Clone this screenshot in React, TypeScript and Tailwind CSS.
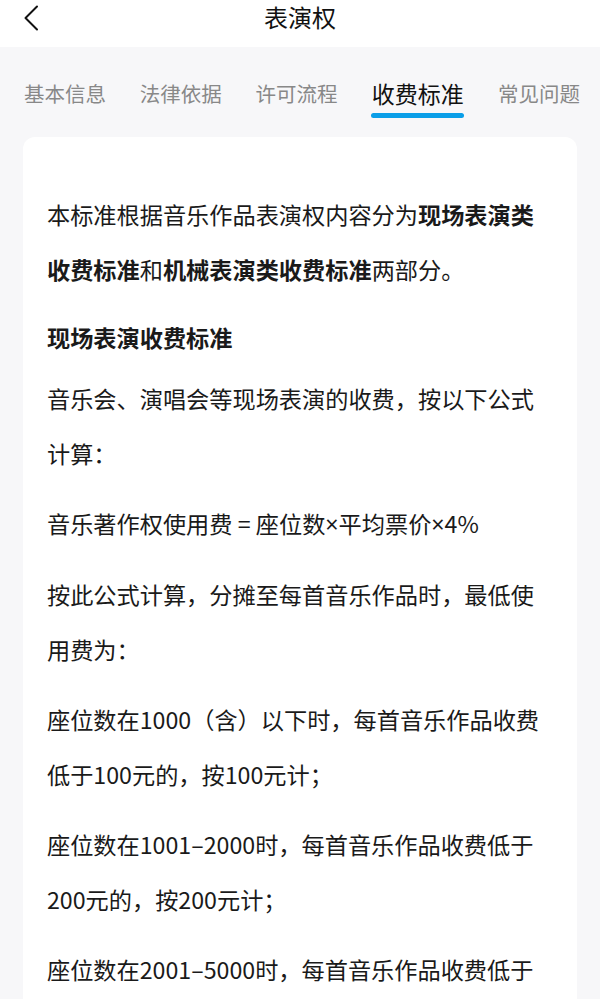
import React from "react";

const tabs = ["基本信息", "法律依据", "许可流程", "收费标准", "常见问题"];

// 乘号用西文字体，显得更窄
const Times = () => <span style={{ fontFamily: '"Noto Sans", sans-serif' }}>×</span>;

const paragraphs: React.ReactNode[] = [
  "音乐会、演唱会等现场表演的收费，按以下公式计算：",
  <>
    音乐著作权使用费 = 座位数<Times />平均票价<Times />4%
  </>,
  "按此公式计算，分摊至每首音乐作品时，最低使用费为：",
  "座位数在1000（含）以下时，每首音乐作品收费低于100元的，按100元计；",
  "座位数在1001–2000时，每首音乐作品收费低于200元的，按200元计；",
  "座位数在2001–5000时，每首音乐作品收费低于300元的，按300元计；",
];

export default function App() {
  return (
    <div
      className="min-h-screen bg-[#f7f7f9] text-[#1a1a1a]"
      style={{ fontFamily: '"Noto Sans CJK SC", "Noto Sans", sans-serif' }}
    >
      {/* 顶部导航 */}
      <header className="relative h-[47px] bg-white">
        <div className="flex h-[33px] items-center justify-center">
          <button className="absolute left-[20px] top-[3px] p-[2px]">
            <svg width="18" height="26" viewBox="0 0 18 26" fill="none">
              <path d="M15 1.5 L3.5 13 L15 24.5" stroke="#111" strokeWidth="2" strokeLinecap="round" strokeLinejoin="round" />
            </svg>
          </button>
          <h1 className="text-[24px] leading-none text-[#111]">表演权</h1>
        </div>
      </header>

      {/* 标签栏 */}
      <nav className="flex h-[90px] items-start justify-between pl-[24px] pr-[20px] pt-[30px]">
        {tabs.map((tab) => {
          const active = tab === "收费标准";
          return (
            <div key={tab} className="flex flex-col items-center">
              <span
                className={
                  active
                    ? "text-[23px] leading-[32px] text-[#111]"
                    : "text-[20.5px] leading-[32px] text-[#888]"
                }
              >
                {tab}
              </span>
              {active && <span className="mt-[4px] h-[5px] w-[93px] rounded-full bg-[#0a9ee8]" />}
            </div>
          );
        })}
      </nav>

      {/* 内容卡片 */}
      <main className="px-[23px]">
        <div className="rounded-t-[12px] bg-white pb-[40px] pl-[24px] pr-[28px] pt-[50px] text-[23.2px] leading-[55px]">
          <p className="mb-[20px]">
            本标准根据音乐作品表演权内容分为<b className="font-bold">现场表演类收费标准</b>和
            <b className="font-bold">机械表演类收费标准</b>两部分。
          </p>
          <h2 className="mb-[14px] text-[23.2px] font-bold leading-[40px]">现场表演收费标准</h2>
          {paragraphs.map((p, i) => (
            <p key={i} className="mb-[15px]">
              {p}
            </p>
          ))}
        </div>
      </main>
    </div>
  );
}
